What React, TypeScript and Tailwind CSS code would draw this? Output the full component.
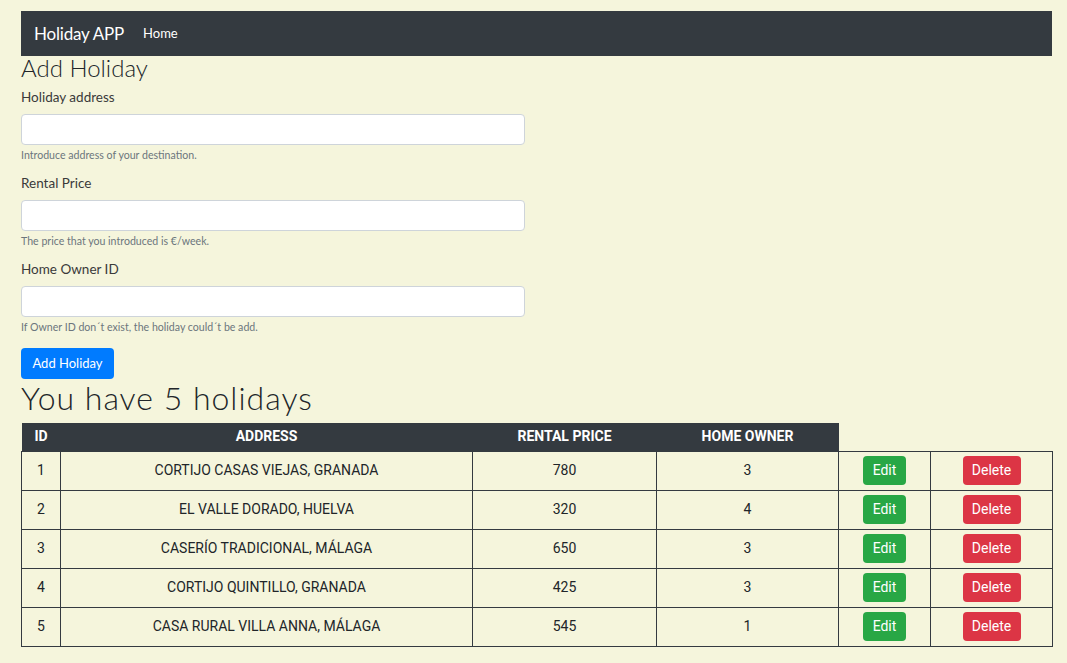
import React from 'react';

const holidays = [
  { id: 1, address: 'CORTIJO CASAS VIEJAS, GRANADA', price: 780, owner: 3 },
  { id: 2, address: 'EL VALLE DORADO, HUELVA', price: 320, owner: 4 },
  { id: 3, address: 'CASERÍO TRADICIONAL, MÁLAGA', price: 650, owner: 3 },
  { id: 4, address: 'CORTIJO QUINTILLO, GRANADA', price: 425, owner: 3 },
  { id: 5, address: 'CASA RURAL VILLA ANNA, MÁLAGA', price: 545, owner: 1 },
];

const fields = [
  { label: 'Holiday address', help: 'Introduce address of your destination.' },
  { label: 'Rental Price', help: 'The price that you introduced is €/week.' },
  { label: 'Home Owner ID', help: 'If Owner ID don´t exist, the holiday could´t be add.' },
];

export default function App() {
  return (
    <div className="min-h-[663px] bg-[#f5f5dc] pt-[11px] pl-[21px] pr-[15px] pb-4 font-['Lato','Open_Sans',sans-serif] text-[#212529]">
      <nav className="flex items-center h-[45px] bg-[#343a40] px-[13px]">
        <span className="text-white text-[17px] tracking-[-0.2px] mr-[19px]">Holiday APP</span>
        <span className="text-white text-[13px]">Home</span>
      </nav>

      <h2 className="text-[24px] leading-[23px] font-light">Add Holiday</h2>

      <form className="w-[504px]">
        {fields.map((f, i) => (
          <div key={f.label} className={i === 0 ? 'mt-[8px]' : 'mt-[10px]'}>
            <label className="block text-[13.5px] leading-[21px] text-[#3a3a3a] mb-[6px]">{f.label}</label>
            <input className="block w-full h-[31px] bg-white border border-[#ced4da] rounded-[4px]" />
            <p className="mt-[3px] text-[10.6px] leading-[15px] text-[#6c757d]">{f.help}</p>
          </div>
        ))}
        <button
          type="button"
          className="mt-[13px] h-[31px] w-[93px] rounded-[4px] bg-[#007bff] text-white text-[13px]"
        >
          Add Holiday
        </button>
      </form>

      <h2 className="text-[32px] leading-[38px] tracking-[1px] font-light mb-[6px]">You have 5 holidays</h2>

      <table className="w-[1031px] table-fixed border-collapse font-['Roboto',sans-serif] text-[14px] text-[#212529]">
        <colgroup>
          <col className="w-[39px]" />
          <col className="w-[412px]" />
          <col className="w-[184px]" />
          <col className="w-[182px]" />
          <col className="w-[92px]" />
          <col className="w-[122px]" />
        </colgroup>
        <thead>
          <tr className="h-[28px]">
            <th className="bg-[#343a40] text-white font-bold">ID</th>
            <th className="bg-[#343a40] text-white font-bold">ADDRESS</th>
            <th className="bg-[#343a40] text-white font-bold">RENTAL PRICE</th>
            <th className="bg-[#343a40] text-white font-bold">HOME OWNER</th>
          </tr>
        </thead>
        <tbody>
          {holidays.map((h) => (
            <tr key={h.id} className="h-[39px]">
              <td className="border border-[#343a40] text-center">{h.id}</td>
              <td className="border border-[#343a40] text-center">{h.address}</td>
              <td className="border border-[#343a40] text-center">{h.price}</td>
              <td className="border border-[#343a40] text-center">{h.owner}</td>
              <td className="border border-[#343a40] text-center">
                <button type="button" className="h-[29px] w-[43px] rounded-[4px] bg-[#28a745] text-white">
                  Edit
                </button>
              </td>
              <td className="border border-[#343a40] text-center">
                <button type="button" className="h-[29px] w-[58px] rounded-[4px] bg-[#dc3545] text-white">
                  Delete
                </button>
              </td>
            </tr>
          ))}
        </tbody>
      </table>
    </div>
  );
}
